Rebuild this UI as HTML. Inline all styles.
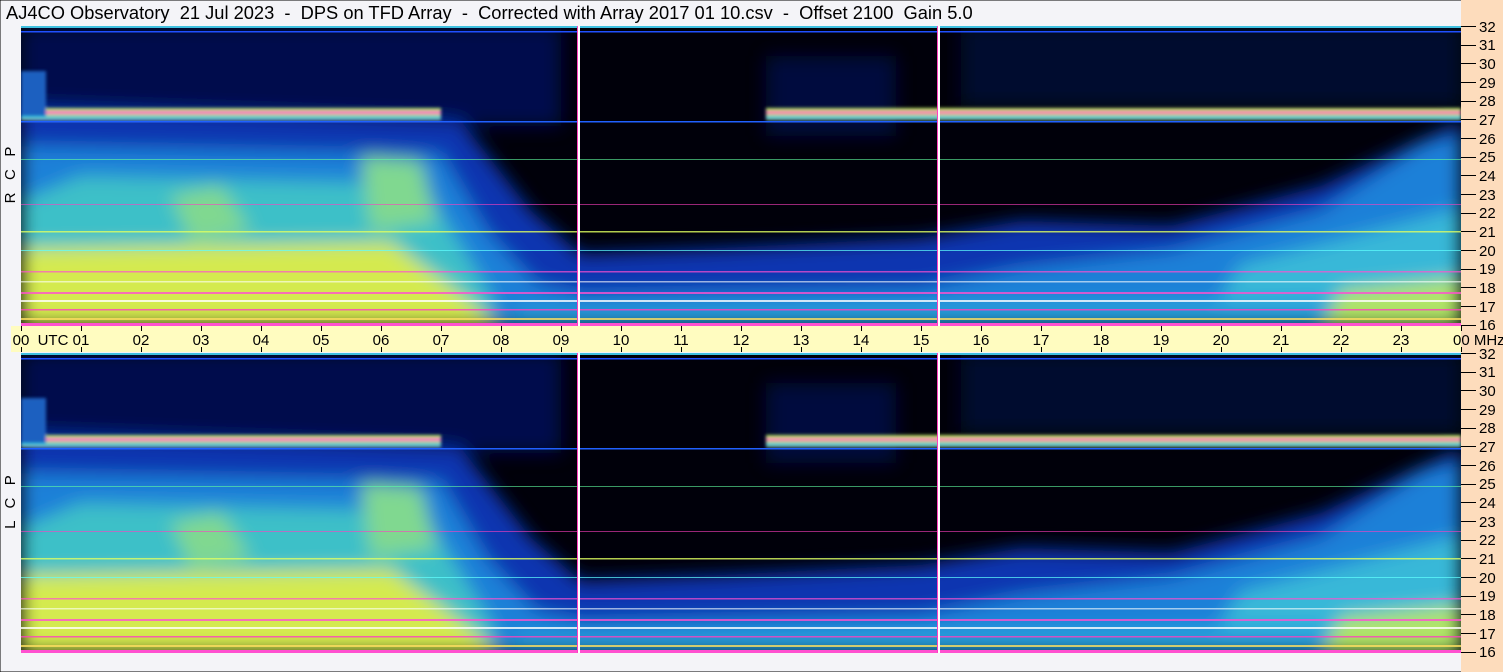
<!DOCTYPE html>
<html><head><meta charset="utf-8"><style>
html,body{margin:0;padding:0;background:#f4f4f8;}
svg{display:block}
text{font-family:"Liberation Sans",sans-serif;}
</style></head><body>
<svg width="1503" height="672" viewBox="0 0 1503 672" xmlns="http://www.w3.org/2000/svg">
<defs>
<filter id="b" x="-10%" y="-20%" width="120%" height="140%"><feGaussianBlur stdDeviation="9"/></filter>
<filter id="b2" x="-10%" y="-50%" width="120%" height="200%"><feGaussianBlur stdDeviation="1.5"/></filter>
<clipPath id="pc"><rect x="0" y="0" width="1440" height="300"/></clipPath>
<g id="panel" clip-path="url(#pc)">
<rect width="1440" height="300" fill="#00000a"/>
<g filter="url(#b)">
<rect x="0" y="0" width="540" height="100" fill="#081664" opacity=".75"/>
<rect x="940" y="0" width="500" height="80" fill="#050e40" opacity=".7"/>
<rect x="745" y="30" width="130" height="80" fill="#0a1a70" opacity=".5"/>
<polygon fill="#0b34b0" points="0,80 440,95 510,185 560,228 700,222 900,212 1000,195 1150,200 1300,160 1440,95 1440,300 0,300"/>
<polygon fill="#1a80d8" points="0,120 420,128 465,205 515,258 560,268 900,262 1000,242 1150,225 1300,185 1400,120 1440,110 1440,300 0,300"/>
<polygon fill="#3ec0c8" points="60,150 400,158 440,220 478,282 0,292 0,175"/>
<polygon fill="#38b8d8" points="1220,238 1380,198 1440,182 1440,300 1180,300"/>
<polygon fill="#2aa0dc" points="500,282 1440,270 1440,300 480,300"/>
<polygon fill="#d4ea50" points="0,222 370,216 440,268 480,300 0,300"/>
<polygon fill="#b0e468" points="1320,264 1440,252 1440,300 1300,300"/>
<polygon fill="#80d890" points="150,170 200,160 230,205 170,215"/>
<polygon fill="#80d890" points="340,130 400,135 415,195 350,205"/>
</g>
<g filter="url(#b2)">
<rect x="0" y="82" width="420" height="12" fill="#b8e060"/>
<rect x="0" y="85" width="420" height="3" fill="#ff50d0"/>
<rect x="0" y="90" width="420" height="3" fill="#30c0e0"/>
<rect x="745" y="82" width="695" height="12" fill="#b8e060"/>
<rect x="745" y="85" width="695" height="3" fill="#ff60c0"/>
<rect x="745" y="90" width="695" height="3" fill="#30c0e0"/>
<rect x="0" y="45" width="25" height="45" fill="#1a60c0"/>
</g>
<rect x="0" y="0" width="1440" height="2" fill="#40c0e0"/>
<rect x="0" y="5" width="1440" height="1.5" fill="#2050ff"/>
<rect x="0" y="95" width="1440" height="1.5" fill="#2060ff"/>
<rect x="0" y="133" width="1440" height="1" fill="#60ffa0" opacity=".6"/>
<rect x="0" y="178" width="1440" height="1" fill="#ff40c0" opacity=".6"/>
<rect x="0" y="205" width="1440" height="1.5" fill="#e0ff60" opacity=".8"/>
<rect x="0" y="224" width="1440" height="1" fill="#60ffff" opacity=".7"/>
<rect x="0" y="245" width="1440" height="1.5" fill="#ff50d0" opacity=".7"/>
<rect x="0" y="255" width="1440" height="1.5" fill="#ffffff" opacity=".6"/>
<rect x="0" y="266" width="1440" height="2" fill="#ff50d0" opacity=".8"/>
<rect x="0" y="274" width="1440" height="2" fill="#ffffff" opacity=".8"/>
<rect x="0" y="283" width="1440" height="1.5" fill="#ff40c0" opacity=".8"/>
<rect x="0" y="292" width="1440" height="2" fill="#ffe060" opacity=".8"/>
<rect x="0" y="297" width="1440" height="3" fill="#ff50d0"/>
<rect x="556" y="0" width="1" height="300" fill="#ff40c0"/>
<rect x="557" y="0" width="2" height="300" fill="#ffffff"/>
<rect x="916" y="0" width="1" height="300" fill="#ff40c0"/>
<rect x="917" y="0" width="2" height="300" fill="#ffffff"/>
</g>
</defs>
<rect width="1503" height="672" fill="#f4f4f8"/>
<rect x="0" y="0" width="1503" height="672" fill="none" stroke="#000" stroke-width="1"/>
<text x="6" y="19" font-size="18.3" fill="#000" xml:space="preserve">AJ4CO Observatory  21 Jul 2023  -  DPS on TFD Array  -  Corrected with Array 2017 01 10.csv  -  Offset 2100  Gain 5.0</text>
<rect x="1461" y="0" width="42" height="672" fill="#fddcbc"/>
<use href="#panel" x="21" y="26"/>
<use href="#panel" x="21" y="353"/>
<rect x="11" y="326" width="1450" height="26" fill="#fffcc0"/>
<g stroke="#000" stroke-width="1">
<path d="M21.5 326v5M21.5 347v5M81.5 326v5M81.5 347v5M141.5 326v5M141.5 347v5M201.5 326v5M201.5 347v5M261.5 326v5M261.5 347v5M321.5 326v5M321.5 347v5M381.5 326v5M381.5 347v5M441.5 326v5M441.5 347v5M501.5 326v5M501.5 347v5M561.5 326v5M561.5 347v5M621.5 326v5M621.5 347v5M681.5 326v5M681.5 347v5M741.5 326v5M741.5 347v5M801.5 326v5M801.5 347v5M861.5 326v5M861.5 347v5M921.5 326v5M921.5 347v5M981.5 326v5M981.5 347v5M1041.5 326v5M1041.5 347v5M1101.5 326v5M1101.5 347v5M1161.5 326v5M1161.5 347v5M1221.5 326v5M1221.5 347v5M1281.5 326v5M1281.5 347v5M1341.5 326v5M1341.5 347v5M1401.5 326v5M1401.5 347v5M1461.5 326v5M1461.5 347v5"/>
</g>
<g font-size="15" fill="#000" text-anchor="middle">
<text x="21" y="345">00</text><text x="53" y="345">UTC</text>
<text x="81" y="345">01</text><text x="141" y="345">02</text><text x="201" y="345">03</text><text x="261" y="345">04</text><text x="321" y="345">05</text><text x="381" y="345">06</text><text x="441" y="345">07</text><text x="501" y="345">08</text><text x="561" y="345">09</text><text x="621" y="345">10</text><text x="681" y="345">11</text><text x="741" y="345">12</text><text x="801" y="345">13</text><text x="861" y="345">14</text><text x="921" y="345">15</text><text x="981" y="345">16</text><text x="1041" y="345">17</text><text x="1101" y="345">18</text><text x="1161" y="345">19</text><text x="1221" y="345">20</text><text x="1281" y="345">21</text><text x="1341" y="345">22</text><text x="1401" y="345">23</text>
</g>
<text x="1453" y="345" font-size="15">00 MHz</text>
<g font-size="15" fill="#000">
<text transform="translate(15,175) rotate(-90)" text-anchor="middle" xml:space="preserve">R   C   P</text>
<text transform="translate(15,502) rotate(-90)" text-anchor="middle" xml:space="preserve">L   C   P</text>
</g>
<g id="fl" font-size="15" fill="#000">
<path stroke="#000" stroke-width="1" d="M1461 26.5h15M1461 45.5h15M1461 63.5h15M1461 82.5h15M1461 101.5h15M1461 119.5h15M1461 138.5h15M1461 157.5h15M1461 175.5h15M1461 194.5h15M1461 213.5h15M1461 231.5h15M1461 250.5h15M1461 269.5h15M1461 287.5h15M1461 306.5h15M1461 325.5h15"/>
<text x="1479" y="32">32</text><text x="1479" y="50">31</text><text x="1479" y="69">30</text><text x="1479" y="88">29</text><text x="1479" y="106">28</text><text x="1479" y="125">27</text><text x="1479" y="144">26</text><text x="1479" y="162">25</text><text x="1479" y="181">24</text><text x="1479" y="200">23</text><text x="1479" y="218">22</text><text x="1479" y="237">21</text><text x="1479" y="256">20</text><text x="1479" y="274">19</text><text x="1479" y="293">18</text><text x="1479" y="312">17</text><text x="1479" y="330">16</text>
</g>
<use href="#fl" x="0" y="327"/>
</svg>
</body></html>
